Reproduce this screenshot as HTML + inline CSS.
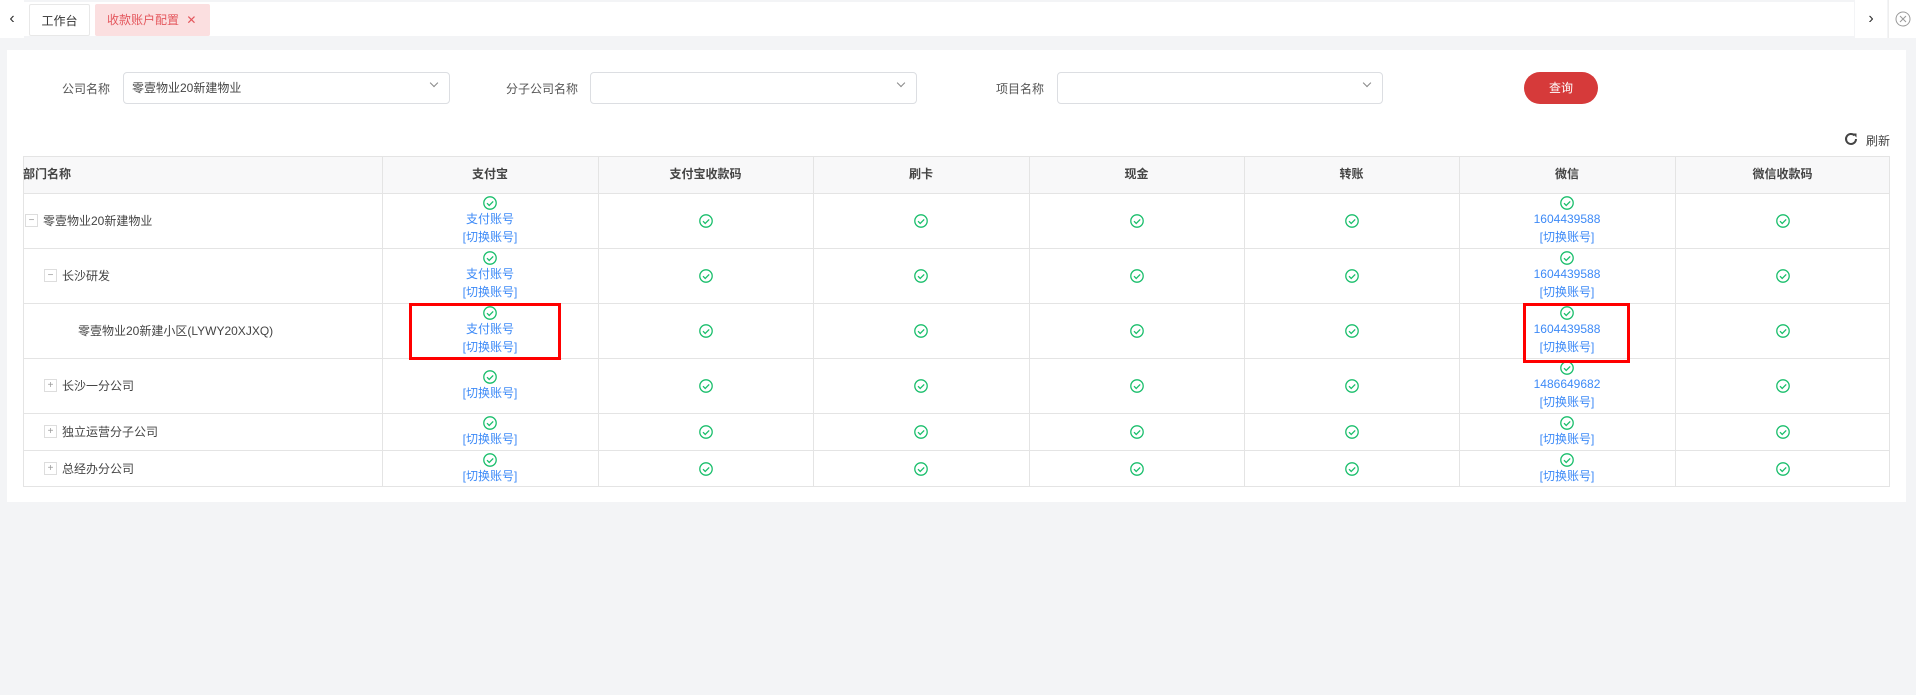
<!DOCTYPE html>
<html><head><meta charset="utf-8">
<style>
*{margin:0;padding:0;box-sizing:border-box}
body{width:1916px;height:695px;background:#f3f4f6;font-family:"Liberation Sans","Noto Sans CJK SC",sans-serif;font-size:12px;color:#333;position:relative;overflow:hidden}
.abs{position:absolute}
.topbar{left:0;top:0;width:1916px;height:38px;background:#f3f4f6}
.tabs{left:24px;top:2px;width:1830px;height:34px;background:#fff}
.tab{position:absolute;top:4px;height:32px;line-height:32px;font-size:12px;border-radius:2px}
.card{left:7px;top:50px;width:1899px;height:452px;background:#fff}
.lbl{font-size:12px;color:#555;top:80px}
.sel{top:72px;height:32px;border:1px solid #dcdee2;border-radius:4px;background:#fff;font-size:12px;line-height:30px;padding-left:8px;color:#444}
.sel:after{content:"";position:absolute;right:12px;top:7px;width:5px;height:5px;border-right:1px solid #888;border-bottom:1px solid #888;transform:rotate(45deg)}
table{position:absolute;left:23px;top:156px;border-collapse:collapse;width:1867px;table-layout:fixed}
td,th{border:1px solid #e4e4e4;text-align:center;font-size:12px;padding:0;vertical-align:middle}
th{background:#f8f8f9;height:37px;font-weight:bold;color:#444}
th:first-child,td:first-child{text-align:left}
.c{display:flex;flex-direction:column;align-items:center;justify-content:center;line-height:18px;color:#3d8af7}
.ck{width:14px;height:14px;display:block}
.box{display:inline-block;width:13px;height:13px;border:1px solid #ddd;vertical-align:middle;font-size:10px;line-height:11px;text-align:center;color:#999;margin-right:5px}
.red{border:3px solid #f00}
</style></head><body>
<div class="abs topbar"></div>
<div class="abs" style="left:0;top:0;width:24px;height:38px;background:#fff;text-align:center;line-height:38px;font-size:16px">&#8249;</div>
<div class="abs tabs"></div>
<div class="tab" style="left:29px;width:61px;background:#fff;border:1px solid #e8e8e8;text-align:center;color:#333">工作台</div>
<div class="tab" style="left:95px;width:115px;background:#fbdfe0;color:#e4575d;padding-left:12px">收款账户配置 <span style="margin-left:4px">✕</span></div>
<div class="abs" style="left:1855px;top:0;width:32px;height:38px;background:#fff;text-align:center;line-height:38px;font-size:16px">&#8250;</div>
<div class="abs" style="left:1888px;top:0;width:28px;height:38px;background:#fff;border-left:1px solid #eee"><svg width="28" height="38"><circle cx="14" cy="19" r="7" fill="none" stroke="#999"/><path d="M11 16l6 6M17 16l-6 6" stroke="#999"/></svg></div>

<div class="abs card"></div>
<div class="abs lbl" style="left:62px">公司名称</div>
<div class="abs sel" style="left:123px;width:327px">零壹物业20新建物业</div>
<div class="abs lbl" style="left:506px">分子公司名称</div>
<div class="abs sel" style="left:590px;width:327px"></div>
<div class="abs lbl" style="left:996px">项目名称</div>
<div class="abs sel" style="left:1057px;width:326px"></div>
<div class="abs" style="left:1524px;top:72px;width:74px;height:32px;border-radius:16px;background:#d63a3a;color:#fff;text-align:center;line-height:32px;font-size:12px">查询</div>
<div class="abs" style="left:1843px;top:131px"><svg width="16" height="16" viewBox="0 0 16 16"><path d="M13 8a5 5 0 1 1-1.5-3.6" fill="none" stroke="#444" stroke-width="2"/><path d="M9.5 2.5h4v4z" fill="#444"/></svg></div>
<div class="abs" style="left:1866px;top:132px;font-size:12px;color:#444">刷新</div>

<table>
<colgroup><col style="width:359px"><col style="width:216px"><col style="width:215px"><col style="width:216px"><col style="width:215px"><col style="width:215px"><col style="width:216px"><col style="width:215px"></colgroup>
<tr><th>部门名称</th><th>支付宝</th><th>支付宝收款码</th><th>刷卡</th><th>现金</th><th>转账</th><th>微信</th><th>微信收款码</th></tr>
</table>
<div id="rows"></div>
<div class="abs red" style="left:409px;top:303px;width:152px;height:57px"></div>
<div class="abs red" style="left:1523px;top:303px;width:107px;height:60px"></div>
<script>
var ck='<svg class="ck" viewBox="0 0 14 14"><circle cx="7" cy="7" r="6.2" fill="none" stroke="#19be6b" stroke-width="1.3"/><path d="M4 7.2l2.2 2.2 4-4" fill="none" stroke="#19be6b" stroke-width="1.3"/></svg>';
var cols=[23,382,598,813,1029,1244,1459,1675,1890];
var rows=[
[193,55,'<span class="box">−</span>零壹物业20新建物业',25,['支付账号','[切换账号]'],['1604439588','[切换账号]']],
[248,55,'<span class="box">−</span>长沙研发',44,['支付账号','[切换账号]'],['1604439588','[切换账号]']],
[303,55,'零壹物业20新建小区(LYWY20XJXQ)',78,['支付账号','[切换账号]'],['1604439588','[切换账号]']],
[358,55,'<span class="box">+</span>长沙一分公司',44,['[切换账号]'],['1486649682','[切换账号]']],
[413,37,'<span class="box">+</span>独立运营分子公司',44,['[切换账号]'],['[切换账号]']],
[450,37,'<span class="box">+</span>总经办分公司',44,['[切换账号]'],['[切换账号]']]];
var h='';
h+='<div class="abs" style="left:23px;top:156px;width:1867px;height:331px;border:1px solid #e4e4e4"></div>';
for(var i=1;i<8;i++)h+='<div class="abs" style="left:'+cols[i]+'px;top:156px;width:1px;height:331px;background:#e4e4e4"></div>';
rows.forEach(function(r){
 h+='<div class="abs" style="left:23px;top:'+r[0]+'px;width:1867px;height:1px;background:#e4e4e4"></div>';
 h+='<div class="abs" style="left:'+r[3]+'px;top:'+r[0]+'px;height:'+r[1]+'px;display:flex;align-items:center;font-size:12px;color:#444">'+r[2]+'</div>';
 for(var c=1;c<8;c++){
  var items=[ck];
  if(c==1)r[4].forEach(function(t){items.push('<span>'+t+'</span>')});
  if(c==6)r[5].forEach(function(t){items.push('<span>'+t+'</span>')});
  h+='<div class="abs c" style="left:'+cols[c]+'px;top:'+r[0]+'px;width:'+(cols[c+1]-cols[c])+'px;height:'+r[1]+'px">'+items.join('')+'</div>';
 }
});
h+='<div class="abs" style="left:23px;top:193px;width:1867px;height:1px;background:#e4e4e4"></div>';
document.getElementById('rows').innerHTML=h;
</script>
<style>table{display:none}</style>
<div class="abs" style="left:24px;top:157px;width:1865px;height:36px;background:#f8f8f9"></div>
<div class="abs" style="left:23px;top:156px;width:1867px;height:37px;display:flex;font-weight:bold;color:#444;font-size:12px;line-height:37px">
<div style="width:359px">部门名称</div><div style="width:216px;text-align:center">支付宝</div><div style="width:215px;text-align:center">支付宝收款码</div><div style="width:216px;text-align:center">刷卡</div><div style="width:215px;text-align:center">现金</div><div style="width:215px;text-align:center">转账</div><div style="width:216px;text-align:center">微信</div><div style="width:215px;text-align:center">微信收款码</div></div>
<div class="abs" style="left:23px;top:156px;width:1867px;height:37px;pointer-events:none">
<div class="abs" style="left:359px;top:0;width:1px;height:37px;background:#e4e4e4"></div><div class="abs" style="left:575px;width:1px;height:37px;background:#e4e4e4"></div><div class="abs" style="left:790px;width:1px;height:37px;background:#e4e4e4"></div><div class="abs" style="left:1006px;width:1px;height:37px;background:#e4e4e4"></div><div class="abs" style="left:1221px;width:1px;height:37px;background:#e4e4e4"></div><div class="abs" style="left:1436px;width:1px;height:37px;background:#e4e4e4"></div><div class="abs" style="left:1652px;width:1px;height:37px;background:#e4e4e4"></div></div>
</body></html>
